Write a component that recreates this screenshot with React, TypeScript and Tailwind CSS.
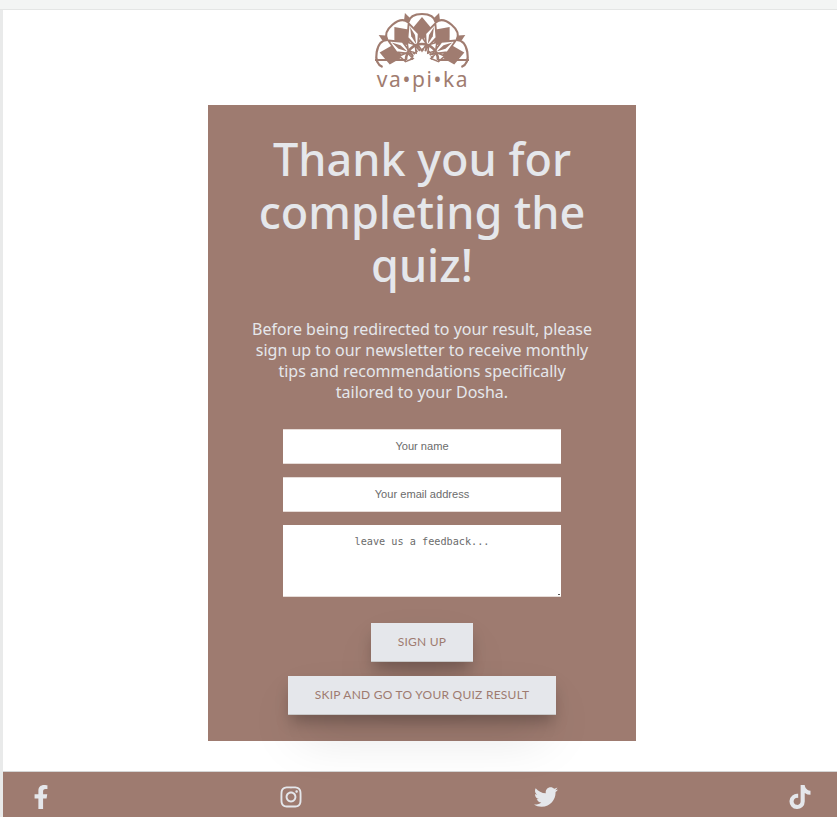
import { FaFacebookF, FaInstagram, FaTwitter, FaTiktok } from "react-icons/fa";

function Mandala() {
  const c = "#a07c70";
  const main = [-80, -40, 0, 40, 80];
  const between = [-60, -20, 20, 60];
  return (
    <svg width="98" height="52" viewBox="0 0 98 52" fill="none" className="overflow-visible">
      {main.map((a) => (
        <g key={a} transform={`rotate(${a} 49 50)`}>
          <path d="M35.3 12.4 Q37 4 49 4 Q61 4 62.7 12.4" stroke={c} strokeWidth="2.2" />
          <path d="M49 31 L39 19 L49 7 L59 19 Z" fill={c} />
        </g>
      ))}
      {between.map((a) => (
        <g key={a} transform={`rotate(${a} 49 50)`}>
          <path d="M49 38 L43 24 L49 11 L55 24 Z" fill="#fff" stroke={c} strokeWidth="1.9" />
          <path d="M49 33 L47 24 L49 15 L51 24 Z" fill={c} />
          <path d="M49 11 L46 6 L49 0 L52 6 Z" fill={c} />
        </g>
      ))}
      {main.map((a) => (
        <g key={`i${a}`} transform={`rotate(${a} 49 50)`}>
          <path d="M49 41 L44.5 34 L49 27 L53.5 34 Z" fill="#fff" stroke={c} strokeWidth="1.5" />
        </g>
      ))}
      <path d="M33 50 A16 16 0 0 1 65 50" stroke={c} strokeWidth="2.6" />
      <path d="M38.5 50 A10.5 10.5 0 0 1 59.5 50" stroke={c} strokeWidth="2.6" strokeDasharray="2 1.2" />
      <path d="M2 50 L33 50 M65 50 L96 50" stroke={c} strokeWidth="2" />
    </svg>
  );
}

const inputCls =
  "w-[278px] h-[35px] pb-[2px] border-y border-[#e6dcd8] bg-white text-center font-['Liberation_Sans',sans-serif] text-[11.1px] placeholder:text-[#6b6b6b]";
const btnCls =
  "h-[39px] pb-[1px] border-b border-[#c9c9c9] bg-[#e5e7eb] font-['Lato',sans-serif] text-[12px] tracking-[0.25px] text-[#9e7b70] shadow-[0_10px_15px_-3px_rgba(0,0,0,0.25),0_25px_50px_-12px_rgba(0,0,0,0.25)]";

export default function App() {
  return (
    <div className="h-[817px] w-[837px] overflow-hidden bg-white font-['Noto_Sans',sans-serif]">
      <div className="h-[10px] border-b border-[#e4e6e5] bg-[#f3f5f4]" />
      <div className="flex h-[807px] flex-col border-l-[3px] border-[#e9eaea]">
        <div className="flex h-[761px] flex-col items-center pl-[4px]">
          <div className="flex h-[95px] flex-col items-center">
            <Mandala />
            <div className="mt-[4px] ml-[2px] text-[21px] leading-[26px] tracking-[1.6px] text-[#a07c70]">
              va•pi•ka
            </div>
          </div>
          <div className="relative z-0 flex h-[636px] w-[428px] flex-col items-center bg-[#9e7b70]">
            <h1 className="mt-[27px] w-[370px] text-center text-[45px] leading-[53px] font-medium text-[#e5e7eb]">
              Thank you for completing the quiz!
            </h1>
            <p className="mt-[28px] w-[345px] text-center text-[16px] leading-[21px] text-[#e5e7eb]">
              Before being redirected to your result, please sign up to our newsletter to receive monthly tips and recommendations specifically tailored to your Dosha.
            </p>
            <input placeholder="Your name" className={`mt-[26px] ${inputCls}`} />
            <input placeholder="Your email address" className={`mt-[13px] ${inputCls}`} />
            <div className="relative mt-[13px] h-[72px] w-[278px]">
              <textarea
                placeholder="leave us a feedback..."
                className="block h-[72px] w-[278px] resize-none border-b border-[#e6dcd8] bg-white pt-[9px] text-center font-['DejaVu_Sans_Mono',monospace] text-[10.2px] leading-[15px] placeholder:text-[#6b6b6b]"
              />
              <span className="absolute right-[1px] bottom-[2px] h-[1px] w-[2px] bg-[#555]" />
            </div>
            <button className={`mt-[26px] w-[102px] ${btnCls}`}>SIGN UP</button>
            <button className={`mt-[14px] w-[268px] ${btnCls}`}>SKIP AND GO TO YOUR QUIZ RESULT</button>
          </div>
        </div>
        <div className="flex h-[46px] items-start border-t border-[#d5d5d5] bg-[#9e7b70] pl-[26px] pt-[13px] text-[24px] text-[#e5e7eb]">
          <FaFacebookF />
          <FaInstagram className="ml-[226px]" />
          <FaTwitter className="ml-[231px]" />
          <FaTiktok className="ml-[230px]" />
        </div>
      </div>
    </div>
  );
}
